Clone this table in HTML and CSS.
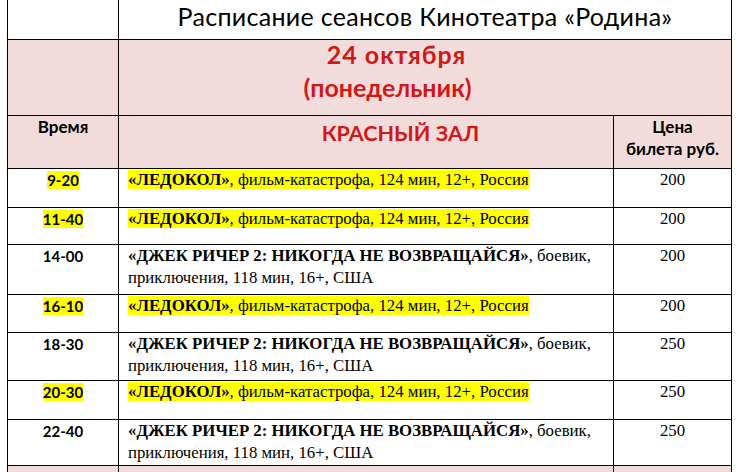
FILE: index.html
```html
<!DOCTYPE html>
<html lang="ru">
<head>
<meta charset="utf-8">
<title>Расписание сеансов Кинотеатра «Родина»</title>
<link rel="stylesheet" href="styles.css">
</head>
<body>
<div class="sched">
  <div class="cell"></div>
  <div class="cell span2 title">Расписание сеансов Кинотеатра «Родина»</div>

  <div class="cell pink"></div>
  <div class="cell span2 pink date">
    <div class="d1">24 октября</div>
    <div class="d2">(понедельник)</div>
  </div>

  <div class="cell pink th">Время</div>
  <div class="cell pink hall">КРАСНЫЙ ЗАЛ</div>
  <div class="cell pink th">Цена<br>билета руб.</div>

  <div class="cell time"><span class="hl">9-20</span></div>
  <div class="cell film"><span class="hl"><b>«ЛЕДОКОЛ»</b>, фильм-катастрофа, 124 мин, 12+, Россия</span></div>
  <div class="cell price">200</div>

  <div class="cell time"><span class="hl">11-40</span></div>
  <div class="cell film"><span class="hl"><b>«ЛЕДОКОЛ»</b>, фильм-катастрофа, 124 мин, 12+, Россия</span></div>
  <div class="cell price">200</div>

  <div class="cell time">14-00</div>
  <div class="cell film"><b>«ДЖЕК РИЧЕР 2: НИКОГДА НЕ ВОЗВРАЩАЙСЯ»</b>, боевик, приключения, 118 мин, 16+, США</div>
  <div class="cell price">200</div>

  <div class="cell time"><span class="hl">16-10</span></div>
  <div class="cell film"><span class="hl"><b>«ЛЕДОКОЛ»</b>, фильм-катастрофа, 124 мин, 12+, Россия</span></div>
  <div class="cell price">200</div>

  <div class="cell time">18-30</div>
  <div class="cell film"><b>«ДЖЕК РИЧЕР 2: НИКОГДА НЕ ВОЗВРАЩАЙСЯ»</b>, боевик, приключения, 118 мин, 16+, США</div>
  <div class="cell price">250</div>

  <div class="cell time"><span class="hl">20-30</span></div>
  <div class="cell film"><span class="hl"><b>«ЛЕДОКОЛ»</b>, фильм-катастрофа, 124 мин, 12+, Россия</span></div>
  <div class="cell price">250</div>

  <div class="cell time">22-40</div>
  <div class="cell film"><b>«ДЖЕК РИЧЕР 2: НИКОГДА НЕ ВОЗВРАЩАЙСЯ»</b>, боевик, приключения, 118 мин, 16+, США</div>
  <div class="cell price">250</div>

  <div class="cell pink"></div>
  <div class="cell pink hall">СИНИЙ ЗАЛ</div>
  <div class="cell pink"></div>
</div>
</body>
</html>
```

FILE: styles.css
```css
html, body {
  margin: 0;
  padding: 0;
  overflow: hidden;
  background: #fff;
}

.sched {
  display: grid;
  grid-template-columns: 110px 494px 117px;
  grid-template-rows: 39px 75px 52px 38px 36px 49px 37px 47px 38px 45px 52px;
  gap: 1px;
  background: #000;
  padding: 0 1px 1px 1px;
  width: max-content;
  margin-left: 7px;
}

.cell {
  background: #fff;
  overflow: hidden;
}

.pink {
  background: #f2dcdb;
}

.span2 {
  grid-column: span 2;
}

.title {
  font-family: Lato, "Open Sans", sans-serif;
  font-size: 25px;
  letter-spacing: 0.3px;
  line-height: 30px;
  color: #000;
  text-align: center;
  padding-top: 1px;
}

.date {
  font-family: Lato, "Open Sans", sans-serif;
  font-weight: bold;
  font-size: 25px;
  line-height: 33px;
  color: #d01818;
  text-align: center;
}

.d1 {
  margin-top: -2px;
  padding-right: 57px;
  letter-spacing: 1px;
}

.d2 {
  padding-right: 75px;
}

.th {
  font-family: Lato, "Open Sans", sans-serif;
  font-weight: bold;
  font-size: 17px;
  line-height: 22px;
  text-align: center;
  color: #000;
}

.hall {
  font-family: Lato, "Open Sans", sans-serif;
  font-weight: bold;
  font-size: 21.5px;
  line-height: 30px;
  color: #d01818;
  text-align: center;
  padding-top: 2px;
  padding-left: 69px;
}

.time {
  font-family: Lato, "Open Sans", sans-serif;
  font-weight: bold;
  font-size: 15px;
  line-height: 22px;
  text-align: center;
}

.film {
  font-family: "Liberation Serif", "Times New Roman", serif;
  font-size: 16.8px;
  line-height: 22px;
  padding: 0 4px 0 9px;
}

.film b {
  font-weight: bold;
}

.price {
  font-family: "Liberation Serif", "Times New Roman", serif;
  font-size: 16.8px;
  line-height: 22px;
  text-align: center;
}

.hl {
  background: #ffff00;
}
```
